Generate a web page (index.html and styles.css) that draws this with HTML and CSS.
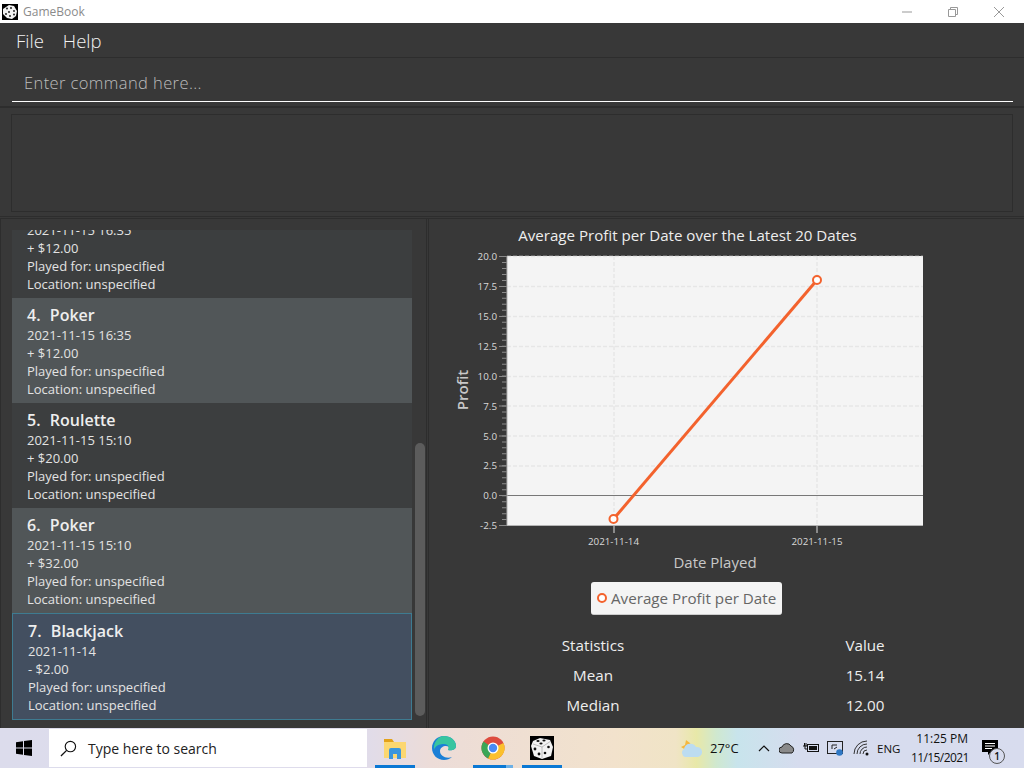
FILE: index.html
```html
<!DOCTYPE html>
<html lang="en">
<head>
  <meta charset="UTF-8">
  <meta name="viewport" content="width=device-width, initial-scale=1">
  <title>GameBook</title>
  <link rel="stylesheet" href="styles.css">
</head>
<body>

<div class="window">
  <div class="titlebar">
    <svg class="app-icon" viewBox="0 0 16 16">
      <rect width="16" height="16" fill="#000"/>
      <path d="M7 1l5 1 3 5-1 5-4 3-5-1-4-4v-5z" fill="#f2f2f2"/>
      <g fill="#111"><circle cx="5" cy="4.500" r="0.900"/><circle cx="9" cy="4" r="0.900"/><circle cx="7" cy="8" r="0.900"/><circle cx="4" cy="10" r="0.900"/><circle cx="8" cy="12" r="0.900"/><circle cx="12" cy="7" r="0.900"/><circle cx="12" cy="10.500" r="0.900"/></g>
    </svg>
    <span class="app-name">GameBook</span>
    <div class="window-controls">
      <svg viewBox="0 0 12 12"><path d="M1 6h10" stroke="#999" fill="none"/></svg>
      <svg viewBox="0 0 12 12"><path d="M1.500 3.500h7v7h-7zM3.500 3.500v-2h7v7h-2" stroke="#999" fill="none"/></svg>
      <svg viewBox="0 0 12 12"><path d="M1 1l10 10M11 1L1 11" stroke="#999" fill="none"/></svg>
    </div>
  </div>

  <div class="menubar">
    <span>File</span>
    <span>Help</span>
  </div>

  <div class="command-box">
    <div class="command-input">Enter command here...</div>
  </div>

  <div class="result-box">
    <div class="result-display"></div>
  </div>

  <div class="main">
    <div class="list-panel">
      <div class="game-list">
        <div class="game-card">
          <div class="game-title">3.&nbsp; Poker</div>
          <div>2021-11-15 16:35</div>
          <div>+ $12.00</div>
          <div>Played for: unspecified</div>
          <div>Location: unspecified</div>
        </div>
        <div class="game-card even">
          <div class="game-title">4.&nbsp; Poker</div>
          <div>2021-11-15 16:35</div>
          <div>+ $12.00</div>
          <div>Played for: unspecified</div>
          <div>Location: unspecified</div>
        </div>
        <div class="game-card">
          <div class="game-title">5.&nbsp; Roulette</div>
          <div>2021-11-15 15:10</div>
          <div>+ $20.00</div>
          <div>Played for: unspecified</div>
          <div>Location: unspecified</div>
        </div>
        <div class="game-card even">
          <div class="game-title">6.&nbsp; Poker</div>
          <div>2021-11-15 15:10</div>
          <div>+ $32.00</div>
          <div>Played for: unspecified</div>
          <div>Location: unspecified</div>
        </div>
        <div class="game-card selected">
          <div class="game-title">7.&nbsp; Blackjack</div>
          <div>2021-11-14</div>
          <div>- $2.00</div>
          <div>Played for: unspecified</div>
          <div>Location: unspecified</div>
        </div>
      </div>
      <div class="scroll-track"><div class="scroll-thumb"></div></div>
    </div>

    <div class="chart-panel">
      <!-- viewBox uses page coordinates -->
      <svg class="chart" viewBox="429 224 595 352">
        <text class="chart-title" x="687.5" y="241" text-anchor="middle">Average Profit per Date over the Latest 20 Dates</text>

        <rect x="507" y="256" width="416" height="269" fill="#f4f4f4"/>
        <path class="grid" d="M507 286.500h416M507 316.500h416M507 346.500h416M507 376.500h416M507 406h416M507 436h416M507 466h416M507 256.500h416M614 256v269M817 256v269"/>
        <path d="M507 495.500h416" stroke="#777" fill="none"/>

        <path d="M507 256v269.500H923" stroke="#b4b4b4" fill="none"/>
        <line class="minor-ticks" x1="504.500" y1="256" x2="504.500" y2="526"/>
        <path class="major-ticks" d="M499 256.500h7M499 286.500h7M499 316.500h7M499 346.500h7M499 376.500h7M499 406h7M499 436h7M499 466h7M499 495.500h7M499 525.500h7"/>
        <path class="x-ticks" d="M614 526v7M817 526v7"/>

        <g class="tick-labels" text-anchor="end">
          <text x="497" y="260">20.0</text>
          <text x="497" y="290">17.5</text>
          <text x="497" y="320">15.0</text>
          <text x="497" y="350">12.5</text>
          <text x="497" y="380">10.0</text>
          <text x="497" y="410">7.5</text>
          <text x="497" y="440">5.0</text>
          <text x="497" y="469">2.5</text>
          <text x="497" y="499">0.0</text>
          <text x="497" y="529">-2.5</text>
        </g>
        <g class="tick-labels" text-anchor="middle">
          <text x="613.5" y="545">2021-11-14</text>
          <text x="817" y="545">2021-11-15</text>
        </g>

        <text class="axis-label axis-label-y" x="0" y="0" text-anchor="middle" transform="translate(468 390) rotate(-90)">Profit</text>
        <text class="axis-label" x="715" y="568" text-anchor="middle">Date Played</text>

        <path d="M613.500 519L817 280" stroke="#f3622d" stroke-width="3" fill="none"/>
        <circle class="point" cx="613.5" cy="519" r="4"/>
        <circle class="point" cx="817" cy="280" r="4"/>
      </svg>

      <div class="legend-row">
        <div class="legend">
          <span class="legend-dot"></span>
          <span>Average Profit per Date</span>
        </div>
      </div>

      <div class="stats">
        <div>Statistics</div><div>Value</div>
        <div>Mean</div><div>15.14</div>
        <div>Median</div><div>12.00</div>
      </div>
    </div>
  </div>
</div>

<div class="taskbar">
  <svg class="start-icon" viewBox="0 0 16 16">
    <path d="M0 2.300l7-1v6.300H0zM8 1.100L16 0v7.600H8zM0 8.500h7v6.300l-7-1zM8 8.500h8V16l-8-1.100z" fill="#000"/>
  </svg>
  <div class="search-box">
    <svg class="search-icon" viewBox="0 0 18 18">
      <circle cx="11" cy="7" r="5.500" fill="none" stroke="#111" stroke-width="1.200"/>
      <path d="M7 11l-6 6" stroke="#111" stroke-width="1.400"/>
    </svg>
    <span>Type here to search</span>
  </div>

  <div class="task-apps">
    <div class="task-app active">
      <svg viewBox="0 0 24 24">
        <path d="M1 3h8l2 3h-10z" fill="#e3a21a"/>
        <path d="M1 6h22v16H1z" fill="#fcd770"/>
        <path d="M6 23v-9q0-2 2-2h8q2 0 2 2v9h-4v-5h-4v5z" fill="#3a96dd"/>
      </svg>
    </div>
    <div class="task-app">
      <svg viewBox="0 0 24 24">
        <path d="M12 0C5 0 0 5.500 0 12c0 7 5.500 12 12 12 3 0 6-1 8-3-6 2-12-1-12-6 0-3 3-5 6-5 4 0 3 3 2 4 3 1 8 0 8-4C24 4 18 0 12 0z" fill="#1b7fd6"/>
        <path d="M12 0c6 0 12 4 12 10 0 4-5 5-8 4 1-2 1-6-4-6C7 8 3 10 2 14 1 7 6 0 12 0z" fill="#37c5a0"/>
      </svg>
    </div>
    <div class="task-app active partial">
      <svg viewBox="0 0 24 24">
        <circle cx="12" cy="12" r="11.500" fill="#dd4b3e"/>
        <path d="M12 12L22.500 7A11.500 11.500 0 0 1 7 22.400z" fill="#fbc02d"/>
        <path d="M12 12L7 22.400A11.500 11.500 0 0 1 2.500 5.500z" fill="#3aa757"/>
        <circle cx="12" cy="12" r="5.500" fill="#fff"/>
        <circle cx="12" cy="12" r="4.200" fill="#4a8af4"/>
      </svg>
    </div>
    <div class="task-app active">
      <svg viewBox="0 0 24 24">
        <rect width="24" height="24" fill="#000"/>
        <path d="M10 2l10 2 3 7-2 9-9 3-8-3-3-10 2-5z" fill="#f2f2f2"/>
        <path d="M3 8l9 3 9-6M12 11l0 11" stroke="#999" stroke-width="0.600" fill="none"/>
        <g fill="#111"><ellipse cx="8" cy="5" rx="1.600" ry="1"/><ellipse cx="14" cy="4.500" rx="1.600" ry="1"/><ellipse cx="11" cy="7.500" rx="1.600" ry="1"/><circle cx="5" cy="13" r="1.400"/><circle cx="9" cy="18" r="1.400"/><circle cx="15" cy="17" r="1.300"/><circle cx="18.500" cy="11" r="1.300"/></g>
      </svg>
    </div>
  </div>

  <div class="tray">
    <svg class="weather-icon" viewBox="0 0 22 20">
      <path d="M1 9l4-2 1-5 4 3 1 3-5 4z" fill="#f6b73c"/>
      <path d="M5 19a4.500 4.500 0 0 1-1-8 6.500 6.500 0 0 1 12-2 5 5 0 0 1 2 10z" fill="#bcdcf0"/>
    </svg>
    <span class="temp">27°C</span>
    <svg class="tray-icon chevron" viewBox="0 0 14 14"><path d="M2 10l5-5 5 5" stroke="#111" stroke-width="1.200" fill="none"/></svg>
    <svg class="tray-icon" viewBox="0 0 16 16"><path d="M3 13a3 3 0 0 1 0-6 5 5 0 0 1 9-1 4 4 0 0 1 1 7z" fill="#8a8a8a" stroke="#222"/></svg>
    <svg class="tray-icon" viewBox="0 0 16 16"><path d="M0 6h4M1.500 3v3M3 3v3M2 6v3h2" stroke="#111" fill="none"/><rect x="4.500" y="4.500" width="11" height="7" fill="none" stroke="#111"/><rect x="6" y="6" width="8" height="4" fill="#111"/></svg>
    <svg class="tray-icon" viewBox="0 0 16 16"><rect x="0.500" y="1.500" width="15" height="12" fill="none" stroke="#222"/><path d="M5 5h5M5 5v4M7 9l3-2" stroke="#222" fill="none"/><circle cx="12.500" cy="12.500" r="3.300" fill="#2f78c4"/></svg>
    <svg class="tray-icon wifi" viewBox="0 0 16 16"><path d="M1 14a13 13 0 0 1 13-13M4 14a10 10 0 0 1 10-10M7 14a7 7 0 0 1 7-7M10 14a4 4 0 0 1 4-4" stroke="#333" fill="none"/><circle cx="14" cy="14" r="1.500" fill="#111"/></svg>
    <span class="lang">ENG</span>
    <div class="clock">
      <div class="clock-time">11:25 PM</div>
      <div class="clock-date">11/15/2021</div>
    </div>
    <div class="notify">
      <svg viewBox="0 0 16 16"><path d="M0 0h16v12H9l-3 3v-3H0z" fill="#000"/><path d="M3 3.500h10M3 6h10M3 8.500h7" stroke="#fff"/></svg>
      <span class="notify-badge">1</span>
    </div>
  </div>
</div>

</body>
</html>
```

FILE: styles.css
```css
body {
  margin: 0;
  height: 768px;
  overflow: hidden;
  font-family: 'Open Sans', sans-serif;
  background: #383838;
}

.window {
  height: 728px;
  display: flex;
  flex-direction: column;
  background: #383838;
  color: #e6e6e6;
}

.titlebar {
  height: 23px;
  flex: none;
  display: flex;
  align-items: center;
  background: white;
}

.app-icon {
  width: 16px;
  height: 16px;
  margin-left: 2px;
}

.app-name {
  margin-left: 5px;
  font-size: 12px;
  color: #8b8b8b;
}

.window-controls {
  margin-left: auto;
  display: flex;
  gap: 34px;
  padding-right: 19px;
}

.window-controls svg {
  width: 12px;
  height: 12px;
}

.menubar {
  height: 34px;
  flex: none;
  display: flex;
  align-items: center;
  gap: 19px;
  padding-left: 16px;
  font-size: 18.5px;
  font-weight: 300;
  color: #f2f2f2;
  border-bottom: 1px solid #2d2d2d;
}

.command-box {
  height: 48px;
  flex: none;
  padding: 0 11px 0 12px;
  border-bottom: 2px solid #2d2d2d;
}

.command-input {
  height: 44px;
  box-sizing: border-box;
  padding: 13px 0 0 12px;
  font-size: 16.5px;
  line-height: 24px;
  font-weight: 300;
  letter-spacing: 0.4px;
  color: #bdbdbd;
  border-bottom: 1px solid white;
}

.result-box {
  height: 109px;
  flex: none;
  box-sizing: border-box;
  padding: 6px 11px 5px 11px;
  border-bottom: 1px solid #2d2d2d;
}

.result-display {
  height: 96px;
  border: 1px solid #2d2d2d;
}

.main {
  flex: 1;
  display: flex;
  min-height: 0;
  border-top: 1px solid #2d2d2d;
  margin-top: 1px;
}

.list-panel {
  width: 427px;
  flex: none;
  position: relative;
  box-sizing: border-box;
  padding: 11px 13px 8px 12px;
  border-left: 1px solid #2d2d2d;
  border-right: 1px solid #2d2d2d;
  margin-right: 1px;
  display: flex;
}

.game-list {
  width: 400px;
  flex: none;
  margin-left: -1px;
  display: flex;
  flex-direction: column;
  justify-content: flex-end;
  overflow: hidden;
}

.game-card {
  flex: none;
  height: 105px;
  box-sizing: border-box;
  padding: 6px 0 0 15px;
  background: #3c3e3f;
  font-size: 13px;
  line-height: 18px;
  color: #e3e3e3;
}

.game-card.even {
  background: #515658;
}

.game-card.selected {
  height: 107px;
  background: #434f60;
  border: 1px solid #3e7b91;
}

.game-title {
  font-size: 16px;
  line-height: 22px;
  font-weight: 600;
  word-spacing: 0.5px;
  color: #eeeeee;
}

.scroll-track {
  position: absolute;
  top: 11px;
  bottom: 12px;
  right: 1px;
  width: 10px;
}

.scroll-thumb {
  position: absolute;
  top: 213px;
  bottom: 0;
  width: 100%;
  border-radius: 5px;
  background: #5c5c5c;
}

.chart-panel {
  flex: 1;
  min-width: 0;
  border-left: 1px solid #2d2d2d;
  overflow: hidden;
}

.chart {
  display: block;
  width: 595px;
  height: 352px;
  margin-top: 5px;
}

.chart-title {
  font-size: 15.1px;
  font-weight: 500;
  fill: #eeeeee;
}

.grid {
  fill: none;
  stroke: #e6e6e6;
  stroke-width: 1.4;
  stroke-dasharray: 4 2;
}

.minor-ticks {
  stroke: #8a8a8a;
  stroke-width: 5;
  stroke-dasharray: 1 4.98;
}

.major-ticks {
  fill: none;
  stroke: #8a8a8a;
}

.x-ticks {
  fill: none;
  stroke: #8a8a8a;
  stroke-width: 2;
}

.tick-labels text {
  font-size: 9.8px;
  fill: #d8d8d8;
}

.axis-label {
  font-size: 15px;
  font-weight: 500;
  fill: #c8c8c8;
}

.axis-label-y {
  font-weight: 600;
}

.point {
  fill: white;
  stroke: #f3622d;
  stroke-width: 2;
}

.legend-row {
  display: flex;
  padding: 6px 0 0 162px;
}

.legend {
  display: flex;
  align-items: center;
  gap: 4px;
  height: 33px;
  box-sizing: border-box;
  padding: 0 6px;
  background: #f4f4f4;
  border-radius: 3px;
  font-size: 15.2px;
  font-weight: 500;
  color: #666;
  border-bottom: 1px solid #ccc;
}

.legend-dot {
  width: 6px;
  height: 6px;
  border: 2px solid #f3622d;
  border-radius: 50%;
  background: white;
}

.stats {
  display: grid;
  grid-template-columns: 272px 272px;
  grid-auto-rows: 30px;
  align-items: center;
  justify-items: center;
  padding: 15px 0 0 28px;
  font-size: 15.2px;
  font-weight: 500;
  color: #eeeeee;
}

.taskbar {
  height: 40px;
  display: flex;
  align-items: center;
  position: relative;
  background: linear-gradient(90deg, #dcdcec 0%, #dfdcec 35%, #ecdcd8 42%, #f2e2cc 60%, #f0e4c6 66%, #e8e8a8 68%, #cfe8d0 70%, #c8e4ec 72%, #d6dcee 78%, #d8dcee 100%);
  color: #111;
}

.start-icon {
  width: 16px;
  height: 16px;
  margin-left: 16px;
  flex: none;
}

.search-box {
  width: 318px;
  height: 38px;
  margin-left: 17px;
  flex: none;
  display: flex;
  align-items: center;
  background: white;
  font-size: 14px;
  color: #222;
}

.search-icon {
  width: 17px;
  height: 17px;
  margin-left: 11px;
  margin-right: 11px;
}

.task-apps {
  display: flex;
  margin-left: 8px;
}

.task-app {
  width: 40px;
  height: 40px;
  margin-right: 9px;
  display: flex;
  align-items: center;
  justify-content: center;
  box-sizing: border-box;
  border-bottom: 3px solid transparent;
}

.task-app.active {
  border-bottom-color: #0a78d4;
}

.task-app.partial {
  border-image: linear-gradient(90deg, #0a78d4 80%, #6cb0e6 80%) 1;
}

.task-app svg {
  width: 24px;
  height: 24px;
  margin-top: 2px;
}

.tray {
  position: absolute;
  left: 680px;
  top: 0;
  height: 40px;
  display: flex;
  align-items: center;
}

.weather-icon {
  width: 22px;
  height: 20px;
}

.temp {
  width: 46px;
  margin-left: 8px;
  font-size: 13px;
}

.tray-icon {
  width: 16px;
  height: 16px;
  margin-right: 8px;
}

.tray-icon.chevron {
  margin-left: 1px;
  width: 14px;
}

.tray-icon.wifi {
  margin-left: 2px;
}

.lang {
  font-size: 11.5px;
  width: 34px;
}

.clock {
  width: 57px;
  text-align: right;
  font-size: 12px;
  line-height: 19px;
  white-space: nowrap;
}

.clock-date {
  letter-spacing: -0.6px;
}

.notify {
  position: relative;
  width: 16px;
  height: 16px;
  margin-left: 14px;
}

.notify svg {
  display: block;
  width: 16px;
  height: 16px;
}

.notify-badge {
  position: absolute;
  left: 7px;
  top: 8px;
  width: 14px;
  height: 14px;
  border: 1px solid #555;
  border-radius: 50%;
  background: #d8dcee;
  font-size: 10px;
  font-weight: 600;
  line-height: 14px;
  text-align: center;
}
```
